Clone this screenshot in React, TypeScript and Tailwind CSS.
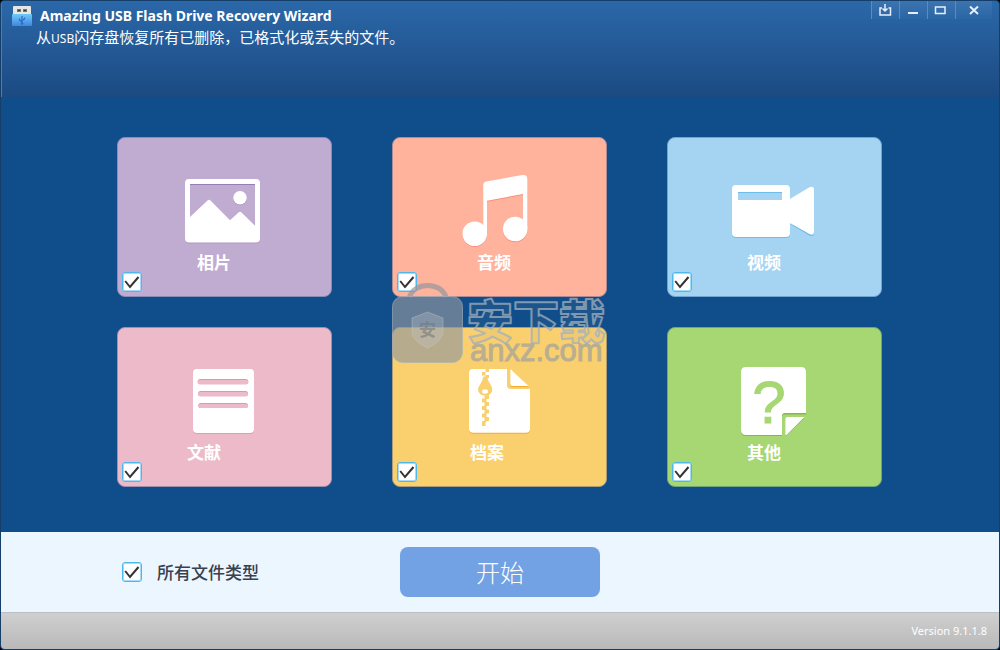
import React, { useState } from 'react';

interface FileType {
  id: string;
  label: string;
  cardClass: string;
  labelClass: string;
  icon: React.ReactNode;
}

const PhotoIcon = () => (
  <svg className="h-20 w-[101px]" viewBox="0 0 101 80" aria-hidden="true">
    <rect x="11" y="12" width="75" height="63.5" rx="4" fill="#a98fc0" opacity="0.7" />
    <rect x="11" y="11" width="75" height="63.5" rx="4" fill="#fff" />
    <path d="M16 16H81V57.7L67.5 44.5Q66 43 64.5 44.5L56 52.3L36.5 32.5Q35 31 33.5 32.5L16 49Z" fill="#c0abd1" />
    <path d="M16 16.5H81" stroke="#9a7bb6" />
    <circle cx="66" cy="30.5" r="6.8" fill="#a98fc0" />
    <circle cx="66" cy="29.7" r="6.8" fill="#fff" />
  </svg>
);

const MusicIcon = () => (
  <svg className="h-20 w-[101px]" viewBox="0 0 101 80" aria-hidden="true">
    <g fill="#fb8f7b">
      <circle cx="25.7" cy="66.6" r="12.3" />
      <circle cx="66.2" cy="62" r="12.3" />
      <path d="M38 33.7L74 27V25L38 31Z" />
    </g>
    <g fill="#fff">
      <circle cx="25.7" cy="65.7" r="12.3" />
      <circle cx="66.2" cy="61" r="12.3" />
      <path d="M34.3 17Q34.3 14 37.3 13.4L73.5 7.1Q78.3 6.6 78.3 11V61H74V26L38 32.7V66L34.3 60Z" />
    </g>
  </svg>
);

const VideoIcon = () => (
  <svg className="h-20 w-[101px]" viewBox="0 0 101 80" aria-hidden="true">
    <g fill="#6cbde8">
      <rect x="8" y="18" width="58" height="52" rx="4" />
      <path d="M66 56L85.5 67.5Q90 69 90 66V60Z" />
    </g>
    <g fill="#fff">
      <rect x="8" y="17" width="58" height="52" rx="4" />
      <path d="M65 31.5L85.5 19.3Q90 17.5 90 21.5V64Q90 68 85.5 66L65 54.5Z" />
    </g>
    <path d="M14 24H58V32H14Z" fill="#a4d4f2" />
    <path d="M14 24.5H58" stroke="#6cbde8" />
  </svg>
);

const DocumentIcon = () => (
  <svg className="h-20 w-[101px]" viewBox="0 0 101 80" aria-hidden="true">
    <rect x="19" y="12" width="61" height="64" rx="4" fill="#df9db3" />
    <rect x="19" y="11" width="61" height="64" rx="4" fill="#fff" />
    <g fill="#e294ad">
      <rect x="23.7" y="21" width="50.6" height="5" rx="2.5" />
      <rect x="24" y="33" width="50" height="5" rx="2.5" />
      <rect x="24.3" y="45" width="49.7" height="5" rx="2.5" />
    </g>
    <g fill="#ecbac9">
      <rect x="23.7" y="22" width="50.6" height="4.5" rx="2.2" />
      <rect x="24" y="34" width="50" height="4.5" rx="2.2" />
      <rect x="24.3" y="46" width="49.7" height="4" rx="2" />
    </g>
  </svg>
);

const ArchiveIcon = () => (
  <svg className="h-20 w-[101px]" viewBox="0 0 101 80" aria-hidden="true">
    <g fill="#f2ad33">
      <path d="M24 12H58V28Q58 32 62 32H81V71.7Q81 75.7 77 75.7H24Q20 75.7 20 71.7V16Q20 12 24 12Z" />
      <path d="M61.3 12L79.5 29H63.3Q61.3 29 61.3 27Z" />
    </g>
    <g fill="#fff">
      <path d="M24 11H58V27Q58 31 62 31H81V70.7Q81 74.7 77 74.7H24Q20 74.7 20 70.7V15Q20 11 24 11Z" />
      <path d="M61.3 11L79.5 28H63.3Q61.3 28 61.3 26Z" />
    </g>
    <g fill="#fad06e">
      <path d="M36.5 11h3.5v3h-3.5zM33 14h3.5v3.5h-3.5zM36.5 17h3.5v3h-3.5z" />
      <path d="M34.5 18.5h3.5Q39 23 42 27.5Q43.3 29.5 43.3 32Q42.5 37.7 36.3 37.7Q30 37.7 29 32Q29 29.5 30.5 27.5Q33.5 23 34.5 18.5Z" />
      <path d="M36.5 37h3.5v4h-3.5zM33 40.5h3.5v4h-3.5zM36.5 44h3.5v4h-3.5zM33 48h3.5v4h-3.5zM36.5 51.5h3.5v4h-3.5zM33 55.5h3.5v4h-3.5zM36.5 59h3.5v4h-3.5zM33 63h3.5v5h-3.5z" />
      <path d="M35.5 38h2v26h-2z" />
    </g>
    <ellipse cx="36" cy="33.5" rx="3" ry="2.2" fill="#fff" />
  </svg>
);

const OtherIcon = () => (
  <svg className="h-20 w-[101px]" viewBox="0 0 101 80" aria-hidden="true">
    <g fill="#84b94a">
      <path d="M22 10H77Q82 10 82 15V56.5H61Q58 56.5 58 59.5V78H22Q17 78 17 73V15Q17 10 22 10Z" />
      <path d="M61.3 60H80.5L62.5 77.5H61.3Z" />
    </g>
    <g fill="#fff">
      <path d="M22 9H77Q82 9 82 14V55H61Q58 55 58 58V77H22Q17 77 17 72V14Q17 9 22 9Z" />
      <path d="M61.3 61Q61.3 59 63.3 59H80.5L62.5 77H61.3Z" />
    </g>
    <text
      x="45"
      y="65"
      textAnchor="middle"
      strokeWidth="1"
      className="fill-[#a6d772] stroke-[#a6d772] font-['Liberation_Sans',sans-serif] text-[60px]"
    >
      ?
    </text>
  </svg>
);

const UsbLogo = () => (
  <svg className="h-5 w-5" viewBox="0 0 20 20" aria-hidden="true">
    <defs>
      <linearGradient id="usb" x1="0" y1="0" x2="0" y2="1">
        <stop offset="0" stopColor="#6fcaf7" />
        <stop offset="1" stopColor="#3f86e0" />
      </linearGradient>
    </defs>
    <rect x="1" y="0" width="18" height="9" rx="1" fill="#e6e6e3" />
    <path d="M5 3h4v3H5zM11 3h4v3h-4z" fill="#77766a" />
    <path d="M6 4h2v1H6zM12 4h2v1h-2z" fill="#37372f" />
    <rect x="0" y="8" width="20" height="12" rx="1" fill="url(#usb)" />
    <path d="M10 10V18M10 16L7.5 14V12.5M10 14.5L12.5 13V11.5" stroke="#2a6cc4" strokeWidth="1.2" fill="none" />
    <circle cx="10" cy="17.5" r="1.2" fill="#2a6cc4" />
  </svg>
);

const Watermark = () => (
  <div className="pointer-events-none absolute inset-0 flex items-center justify-center">
    <svg className="h-[82px] w-[216px] overflow-visible" viewBox="0 0 216 82" aria-hidden="true">
      <path d="M17.5 13C22 -2.500 49 -2.500 54 13" fill="none" stroke="#94979e" strokeWidth="5" opacity="0.7" />
      <rect x="0.5" y="12.5" width="70" height="66" rx="10" fill="#94979e" fillOpacity="0.65" stroke="#a9b3bd" strokeOpacity="0.6" />
      <path d="M35.5 28L51 34V49Q49 58 35.5 64Q22 58 20 49V34Z" fill="#c3c8cc" fillOpacity="0.3" stroke="#c9c9c4" strokeOpacity="0.4" />
      <text x="35.5" y="52" textAnchor="middle" className="fill-[#77797b] font-['Noto_Sans_CJK_SC',sans-serif] text-[17px] font-bold" opacity="0.6">
        安
      </text>
      <text
        x="75"
        y="54"
        className="fill-[#94979e] stroke-[#a3b0bd] font-['Noto_Sans_CJK_SC',sans-serif] text-[46px] font-black"
        fillOpacity="0.1"
        strokeOpacity="0.75"
        strokeWidth="2"
        strokeLinejoin="round"
      >
        安下载
      </text>
      <text
        x="78"
        y="77"
        className="fill-[#a0a1a0] stroke-[#a0a1a0] font-['Liberation_Sans',sans-serif] text-[31px]"
        strokeWidth="1"
        opacity="0.7"
      >
        anxz.com
      </text>
    </svg>
  </div>
);

interface TickBoxProps {
  id: string;
  checked: boolean;
  onChange: () => void;
}

const TickBox: React.FC<TickBoxProps> = ({ id, checked, onChange }) => (
  <span className="relative block h-5 w-5">
    <input
      id={id}
      type="checkbox"
      checked={checked}
      onChange={onChange}
      className="peer block h-5 w-5 appearance-none rounded-[3px] border border-[#4db8f0] bg-white ring-1 ring-inset ring-[#a5dcfa]"
    />
    <svg className="pointer-events-none absolute inset-0 hidden h-5 w-5 peer-checked:block" viewBox="0 0 20 20" aria-hidden="true">
      <path d="M3.2 9L8 15L16.5 5" fill="none" stroke="#333" strokeWidth="2" />
    </svg>
  </span>
);

const fileTypes: FileType[] = [
  { id: 'photo', label: '相片', cardClass: 'bg-[#c0abd1] border-[#8a8bb8]', labelClass: 'pl-[79px]', icon: <PhotoIcon /> },
  { id: 'audio', label: '音频', cardClass: 'bg-[#ffb29c] border-[#ad8b95]', labelClass: 'pl-[84px]', icon: <MusicIcon /> },
  { id: 'video', label: '视频', cardClass: 'bg-[#a4d4f2] border-[#6fa5d0]', labelClass: 'pl-[79px]', icon: <VideoIcon /> },
  { id: 'document', label: '文献', cardClass: 'bg-[#ecbac9] border-[#a08fae]', labelClass: 'pl-[69px]', icon: <DocumentIcon /> },
  { id: 'archive', label: '档案', cardClass: 'bg-[#fad06e] border-[#ab9c78]', labelClass: 'pl-[77px]', icon: <ArchiveIcon /> },
  { id: 'other', label: '其他', cardClass: 'bg-[#a6d772] border-[#71a57a]', labelClass: 'pl-[79px]', icon: <OtherIcon /> },
];

const windowButtons = [
  { label: 'Update', width: 'w-7', stroke: 1.5, path: 'M10 3V10M7.5 7.5L10 10L12.5 7.5M7 7H5V14H15.5V7H13.500' },
  { label: 'Minimize', width: 'w-7', stroke: 2, path: 'M5 12H15' },
  { label: 'Maximize', width: 'w-7', stroke: 1.5, path: 'M4.5 6H14V12.500H4.500Z' },
  { label: 'Close', width: 'w-[37px]', stroke: 2, path: 'M6 5.500L14 13M14 5.500L6 13' },
];

const TitleBar: React.FC = () => (
  <header className="flex h-24 items-start justify-between rounded-t border-l border-[#4f7daa] bg-linear-to-b from-[#2b68a9] to-[#1c4a82]">
    <div className="pt-[5px] pl-2.5">
      <div className="flex h-5 items-center gap-2">
        <UsbLogo />
        <h1 className="font-['Noto_Sans','Open_Sans',sans-serif] text-sm font-bold text-white">
          Amazing USB Flash Drive Recovery Wizard
        </h1>
      </div>
      <p className="pl-6 font-['Noto_Sans_CJK_SC',sans-serif] text-[15px] leading-[22px] text-white">
        从<span className="font-['Noto_Sans',sans-serif] text-xs">USB</span>闪存盘恢复所有已删除，已格式化或丢失的文件。
      </p>
    </div>
    <div className="mr-[7px] flex">
      {windowButtons.map(button => (
        <button
          key={button.label}
          type="button"
          aria-label={button.label}
          className={`flex h-[18px] items-start justify-center border-l border-[#5c8bbd] bg-linear-to-b from-[#3c74b0] to-[#2a65a4] text-[#e8eff8] ${button.width}`}
        >
          <svg
            className="h-[18px] w-[21px]"
            viewBox="0 0 21 18"
            fill="none"
            stroke="currentColor"
            strokeWidth={button.stroke}
            aria-hidden="true"
          >
            <path d={button.path} />
          </svg>
        </button>
      ))}
    </div>
  </header>
);

const App: React.FC = () => {
  const [selected, setSelected] = useState<string[]>(fileTypes.map(type => type.id));
  const allSelected = selected.length === fileTypes.length;

  const toggle = (id: string) =>
    setSelected(prev => (prev.includes(id) ? prev.filter(item => item !== id) : [...prev, id]));

  return (
    <div className="bg-black">
      <div className="relative flex min-h-screen flex-col rounded border border-[#153f69] bg-[#104e8b]">
        <TitleBar />
        <main className="grid flex-1 grid-cols-3 content-start gap-x-[60px] gap-y-[30px] pt-10 pr-[117px] pb-11 pl-[116px]">
          {fileTypes.map(type => (
            <label
              key={type.id}
              htmlFor={type.id}
              className={`flex flex-col rounded-lg border pt-[30px] pb-1 ${type.cardClass}`}
            >
              <span className="flex justify-center">{type.icon}</span>
              <span
                className={`pt-1 font-['Noto_Sans_CJK_SC',sans-serif] text-[17px] leading-5 font-bold text-white ${type.labelClass}`}
              >
                {type.label}
              </span>
              <span className="pl-1">
                <TickBox id={type.id} checked={selected.includes(type.id)} onChange={() => toggle(type.id)} />
              </span>
            </label>
          ))}
        </main>
        <section className="grid h-20 grid-cols-[1fr_200px_1fr] items-center bg-[#ebf6ff]">
          <div className="flex items-center gap-[15px] pl-[121px]">
            <TickBox
              id="all-types"
              checked={allSelected}
              onChange={() => setSelected(allSelected ? [] : fileTypes.map(type => type.id))}
            />
            <label htmlFor="all-types" className="font-['Noto_Sans_CJK_SC',sans-serif] text-[17px] leading-5 font-medium text-[#39404f]">
              所有文件类型
            </label>
          </div>
          <button
            type="button"
            className="h-[50px] rounded-lg bg-[#73a2e4] font-['Noto_Sans_CJK_SC',sans-serif] text-2xl font-light text-white"
          >
            开始
          </button>
        </section>
        <footer className="flex h-[37px] items-center justify-end rounded-b-sm border-t border-[#b9c1c8] bg-linear-to-b from-[#cfcfcf] to-[#b9b9b9] pr-3">
          <span className="font-['Noto_Sans',sans-serif] text-[11px] text-white">Version 9.1.1.8</span>
        </footer>
        <Watermark />
      </div>
    </div>
  );
};

export default App;
